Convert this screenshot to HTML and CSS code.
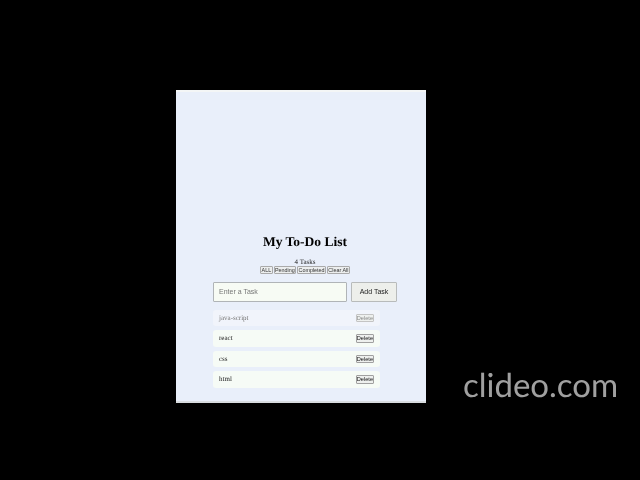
FILE: index.html
```html
<!DOCTYPE html>
<html lang="en">
<head>
<meta charset="utf-8">
<title>My To-Do List</title>
<link rel="stylesheet" href="styles.css">
</head>
<body>
<main class="panel">
  <h1 class="title">My To-Do List</h1>
  <div class="count">4 Tasks</div>
  <div class="filters">
    <button class="filter">ALL</button>
    <button class="filter">Pending</button>
    <button class="filter">Completed</button>
    <button class="filter">Clear All</button>
  </div>
  <div class="entry">
    <input class="field" placeholder="Enter a Task">
    <button class="add">Add Task</button>
  </div>
  <ul class="tasks">
    <li class="task done"><span>java-script</span><button class="del">Delete</button></li>
    <li class="task"><span>react</span><button class="del">Delete</button></li>
    <li class="task"><span>css</span><button class="del">Delete</button></li>
    <li class="task"><span>html</span><button class="del">Delete</button></li>
  </ul>
</main>
<div class="mark">clideo.com</div>
</body>
</html>
```
FILE: styles.css
```css
* { box-sizing: border-box; }
html, body { height: 100%; }
body {
  margin: 0;
  background: #000;
  padding: 90px 0 0 176px;
  overflow: hidden;
  font-family: "Liberation Serif", serif;
  text-rendering: geometricPrecision;
}
.panel {
  width: 250px;
  height: 313px;
  background: #e9effa;
  border-top: 2px solid #f4f6f6;
  border-bottom: 2px solid #d8dcdf;
  display: flex;
  flex-direction: column;
  justify-content: flex-end;
  padding: 0 29px 13.5px 37px;
  filter: blur(0.25px);
}
.title {
  margin: 0 0 7px;
  text-align: center;
  font-size: 13.5px;
  line-height: 18px;
  font-weight: bold;
  color: #000;
}
.count {
  text-align: center;
  font-size: 7px;
  line-height: 8px;
  color: #222;
}
.filters {
  display: flex;
  justify-content: center;
  gap: 1px;
  margin-bottom: 8.5px;
}
.filter {
  margin: 0;
  padding: 0 0.4px;
  height: 8px;
  font: 5.4px/6px "Liberation Sans", sans-serif;
  color: #333;
  background: #eceeee;
  border: 1px solid #aaa;
  border-radius: 1px;
}
.entry {
  display: flex;
  gap: 4px;
  margin-bottom: 8px;
}
.field {
  width: 134px;
  height: 19.5px;
  padding: 0 5px;
  font: 7px "Liberation Sans", sans-serif;
  background: #f7fbf4;
  border: 1px solid #b0b4b7;
  border-radius: 1px;
}
.field::placeholder { color: #777; }
.add {
  width: 46px;
  height: 19.5px;
  padding: 0;
  font: 7px "Liberation Sans", sans-serif;
  color: #222;
  background: #edefeb;
  border: 1px solid #b8bbbb;
  border-radius: 1px;
}
.tasks {
  list-style: none;
  margin: 0;
  padding: 0;
  display: flex;
  flex-direction: column;
  gap: 4px;
  width: 167px;
}
.task {
  display: flex;
  justify-content: space-between;
  align-items: center;
  height: 16.5px;
  padding: 0 6px;
  font-size: 7px;
  color: #222;
  background: #f6fbf6;
  border-radius: 3px;
}
.del {
  margin: 0;
  padding: 0;
  height: 8.5px;
  font: 5.6px/6px "Liberation Sans", sans-serif;
  color: #111;
  background: #eef0ee;
  border: 1px solid #a0a0a0;
  border-radius: 1px;
}
.done { color: #777; background: #f1f4fb; }
.done .del { color: #888; border-color: #c4c4c4; }
.mark {
  position: absolute;
  left: 463px;
  top: 365px;
  font: 33px/40px "Lato", sans-serif;
  color: #a0a0a0;
  filter: blur(0.3px);
}
```
